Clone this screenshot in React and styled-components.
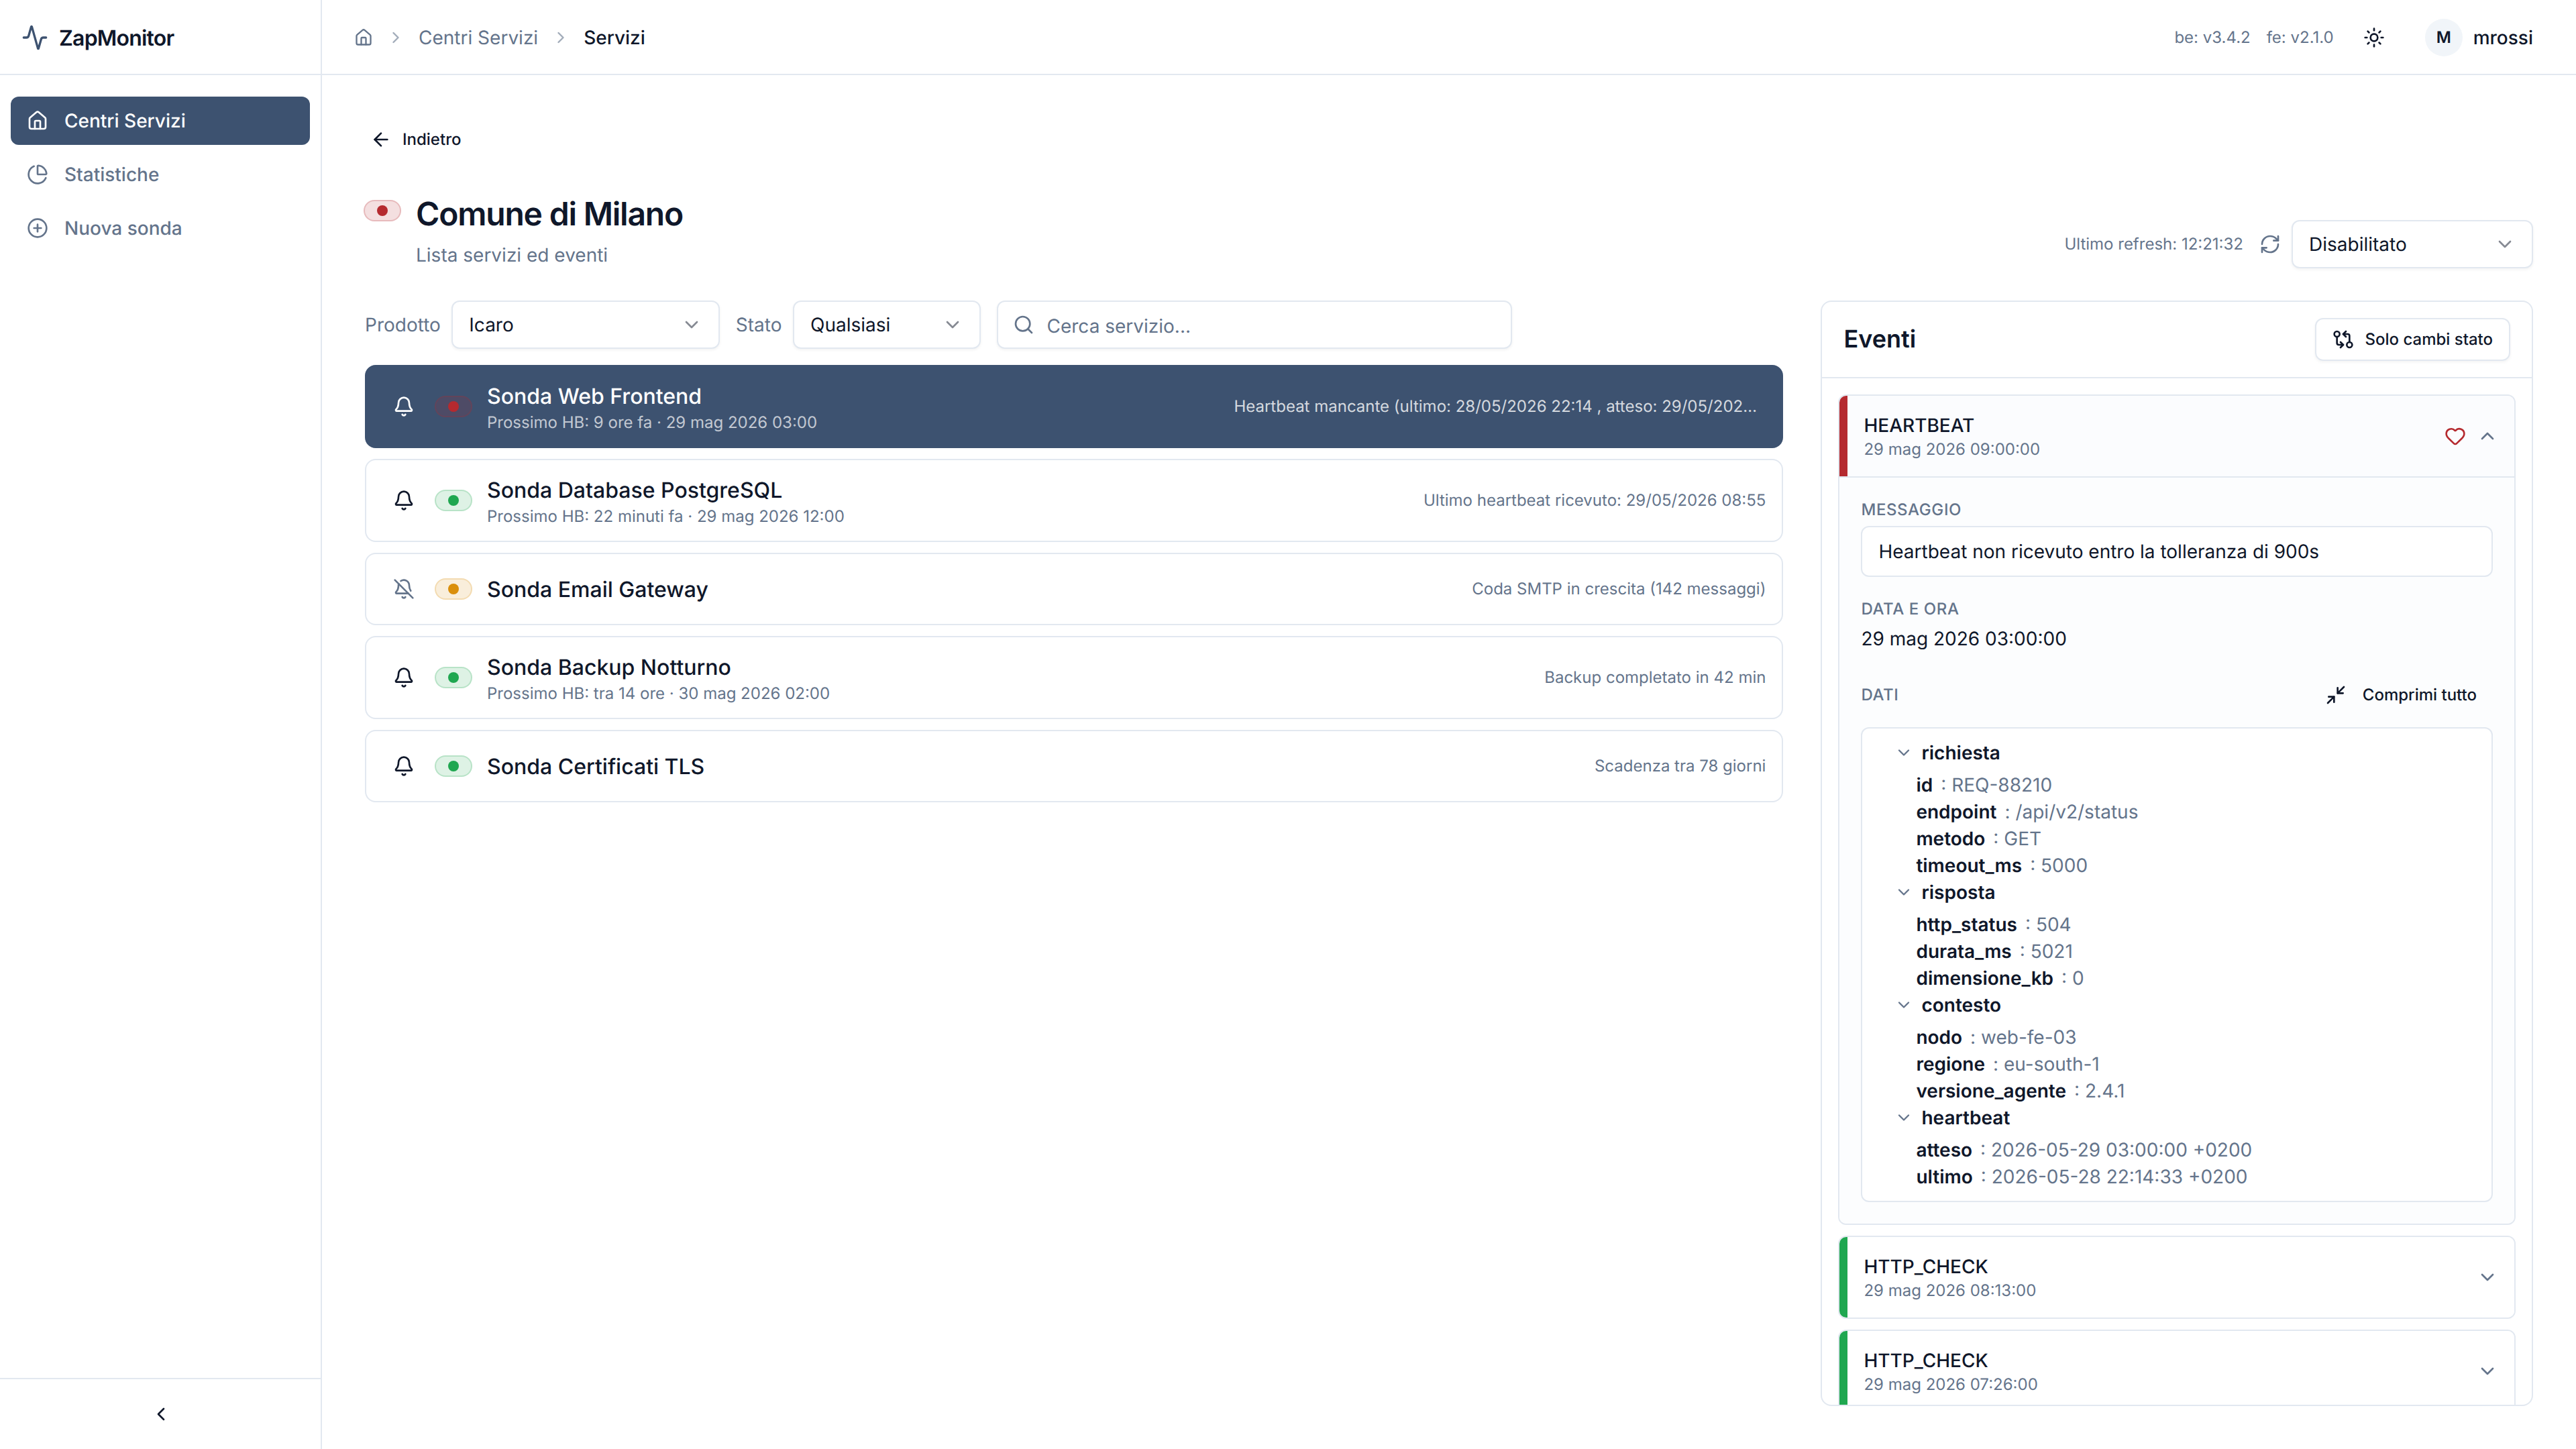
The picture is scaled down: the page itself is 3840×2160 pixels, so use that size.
import React from 'react';

import {
    Activity,
    ArrowLeft,
    Bell,
    BellOff,
    ChartPie,
    ChevronDown,
    ChevronLeft,
    ChevronRight,
    ChevronUp,
    CirclePlus,
    GitCompareArrows,
    Heart,
    House,
    Minimize2,
    RefreshCw,
    Search,
    Sun,
} from 'lucide-react';
import styled, { createGlobalStyle, css } from 'styled-components';

const colors = {
    primary: '#3d5270',
    text: '#0f172a',
    muted: '#64748b',
    border: '#e2e8f0',
    surface: '#f1f5f9',
    error: '#b52a2f',
    ok: '#1fa750',
    warning: '#da8f0b',
};

const tints = {
    error: '181, 42, 47',
    ok: '31, 167, 80',
    warning: '218, 143, 11',
};

const navItems = [
    { label: 'Centri Servizi', icon: House, active: true },
    { label: 'Statistiche', icon: ChartPie },
    { label: 'Nuova sonda', icon: CirclePlus },
];

const services = [
    {
        name: 'Sonda Web Frontend',
        next: 'Prossimo HB: 9 ore fa · 29 mag 2026 03:00',
        note: 'Heartbeat mancante (ultimo: 28/05/2026 22:14 , atteso: 29/05/2026 03:00)',
        status: 'error',
        selected: true,
    },
    {
        name: 'Sonda Database PostgreSQL',
        next: 'Prossimo HB: 22 minuti fa · 29 mag 2026 12:00',
        note: 'Ultimo heartbeat ricevuto: 29/05/2026 08:55',
        status: 'ok',
    },
    {
        name: 'Sonda Email Gateway',
        note: 'Coda SMTP in crescita (142 messaggi)',
        status: 'warning',
        silenced: true,
    },
    {
        name: 'Sonda Backup Notturno',
        next: 'Prossimo HB: tra 14 ore · 30 mag 2026 02:00',
        note: 'Backup completato in 42 min',
        status: 'ok',
    },
    {
        name: 'Sonda Certificati TLS',
        note: 'Scadenza tra 78 giorni',
        status: 'ok',
    },
];

const eventData = {
    richiesta: { id: 'REQ-88210', endpoint: '/api/v2/status', metodo: 'GET', timeout_ms: 5000 },
    risposta: { http_status: 504, durata_ms: 5021, dimensione_kb: 0 },
    contesto: { nodo: 'web-fe-03', regione: 'eu-south-1', versione_agente: '2.4.1' },
    heartbeat: { atteso: '2026-05-29 03:00:00 +0200', ultimo: '2026-05-28 22:14:33 +0200' },
};

const Status = ({ type }) => (
    <StatusBadge $type={type}>
        <StatusDot $type={type} />
    </StatusBadge>
);

const Dropdown = ({ value, width }) => (
    <SelectBox $width={width}>
        {value}
        <ChevronDown size={32} />
    </SelectBox>
);

const Sidebar = () => (
    <Aside>
        <Brand>
            <Activity size={40} color={colors.primary} />
            <BrandName>ZapMonitor</BrandName>
        </Brand>
        <Nav>
            {navItems.map(({ label, icon: Icon, active }) => (
                <NavItem key={label} $active={active}>
                    <Icon size={32} />
                    {label}
                </NavItem>
            ))}
        </Nav>
        <Collapse>
            <ChevronLeft size={32} />
        </Collapse>
    </Aside>
);

const TopBar = () => (
    <Header>
        <Breadcrumb>
            <House size={28} />
            <Separator size={28} />
            <span>Centri Servizi</span>
            <Separator size={28} />
            <Current>Servizi</Current>
        </Breadcrumb>
        <HeaderTools>
            <Version>be: v3.4.2</Version>
            <Version>fe: v2.1.0</Version>
            <IconButton>
                <Sun size={32} />
            </IconButton>
            <User>
                <Avatar>M</Avatar>
                mrossi
            </User>
        </HeaderTools>
    </Header>
);

const ServiceRow = ({ name, next, note, status, selected, silenced }) => (
    <Row $selected={selected}>
        <BellButton $silenced={silenced}>
            {silenced ? <BellOff size={32} /> : <Bell size={32} />}
        </BellButton>
        <Status type={status} />
        <RowText>
            <RowName>{name}</RowName>
            {next && <RowNext $selected={selected}>{next}</RowNext>}
        </RowText>
        <RowNote $selected={selected}>{note}</RowNote>
    </Row>
);

const DataTree = ({ data }) => (
    <Tree>
        {Object.entries(data).map(([group, fields]) => (
            <div key={group}>
                <TreeGroup>
                    <ChevronDown size={28} />
                    {group}
                </TreeGroup>
                <TreeFields>
                    {Object.entries(fields).map(([key, value]) => (
                        <TreeField key={key}>
                            <TreeKey>{key}</TreeKey>
                            <span>: {value}</span>
                        </TreeField>
                    ))}
                </TreeFields>
            </div>
        ))}
    </Tree>
);

const Event = ({ title, date, status, heartbeat, children }) => (
    <EventCard>
        <EventHeader $status={status} $open={!!children}>
            <div>
                <EventTitle>{title}</EventTitle>
                <EventDate>{date}</EventDate>
            </div>
            <EventIcons>
                {heartbeat && <Heart size={32} color={colors.error} />}
                {children ? <ChevronUp size={32} /> : <ChevronDown size={32} />}
            </EventIcons>
        </EventHeader>
        {children && <EventBody>{children}</EventBody>}
    </EventCard>
);

const App = () => (
    <>
        <GlobalStyle />
        <Page>
            <Sidebar />
            <Main>
                <TopBar />
                <Content>
                    <BackButton>
                        <ArrowLeft size={32} />
                        Indietro
                    </BackButton>
                    <TitleBar>
                        <TitleGroup>
                            <Status type="error" />
                            <div>
                                <Title>Comune di Milano</Title>
                                <Subtitle>Lista servizi ed eventi</Subtitle>
                            </div>
                        </TitleGroup>
                        <Refresh>
                            <RefreshLabel>Ultimo refresh: 12:21:32</RefreshLabel>
                            <RefreshCw size={32} />
                            <Dropdown value="Disabilitato" width={360} />
                        </Refresh>
                    </TitleBar>
                    <Columns>
                        <Services>
                            <Filters>
                                <Filter>
                                    Prodotto
                                    <Dropdown value="Icaro" width={400} />
                                </Filter>
                                <Filter>
                                    Stato
                                    <Dropdown value="Qualsiasi" width={280} />
                                </Filter>
                                <SearchBox>
                                    <Search size={32} />
                                    <span>Cerca servizio...</span>
                                </SearchBox>
                            </Filters>
                            {services.map((service) => (
                                <ServiceRow key={service.name} {...service} />
                            ))}
                        </Services>
                        <Panel>
                            <PanelHeader>
                                <PanelTitle>Eventi</PanelTitle>
                                <OutlineButton>
                                    <GitCompareArrows size={32} />
                                    Solo cambi stato
                                </OutlineButton>
                            </PanelHeader>
                            <PanelBody>
                                <Event title="HEARTBEAT" date="29 mag 2026 09:00:00" status="error" heartbeat>
                                    <Section>
                                        <Label>MESSAGGIO</Label>
                                        <Message>Heartbeat non ricevuto entro la tolleranza di 900s</Message>
                                    </Section>
                                    <Section>
                                        <Label>DATA E ORA</Label>
                                        <Value>29 mag 2026 03:00:00</Value>
                                    </Section>
                                    <div>
                                        <DataHeader>
                                            <Label>DATI</Label>
                                            <GhostButton>
                                                <Minimize2 size={32} />
                                                Comprimi tutto
                                            </GhostButton>
                                        </DataHeader>
                                        <DataTree data={eventData} />
                                    </div>
                                </Event>
                                <Event title="HTTP_CHECK" date="29 mag 2026 08:13:00" status="ok" />
                                <Event title="HTTP_CHECK" date="29 mag 2026 07:26:00" status="ok" />
                            </PanelBody>
                        </Panel>
                    </Columns>
                </Content>
            </Main>
        </Page>
    </>
);

export default App;

// STYLED COMPONENTS BELOW:

const GlobalStyle = createGlobalStyle`
    * {
        box-sizing: border-box;
    }

    body {
        margin: 0;
        background: #fff;
        color: ${colors.text};
        font-family: Inter, sans-serif;
        font-size: 28px;
        line-height: 40px;
        text-rendering: geometricPrecision;
        -webkit-font-smoothing: antialiased;
    }

    svg {
        display: block;
        flex-shrink: 0;
    }
`;

const Page = styled.div`
    display: flex;
    height: 100vh;
    overflow: hidden;
`;

const Aside = styled.aside`
    display: flex;
    flex-direction: column;
    width: 480px;
    flex-shrink: 0;
    border-right: 2px solid ${colors.border};
`;

const Brand = styled.div`
    display: flex;
    align-items: center;
    gap: 16px;
    height: 112px;
    padding: 0 32px;
    box-shadow: inset 0 -2px 0 ${colors.border};
`;

const BrandName = styled.span`
    font-size: 32px;
    font-weight: 600;
    line-height: 41px;
    letter-spacing: -0.025em;
`;

const Nav = styled.nav`
    display: flex;
    flex-direction: column;
    flex: 1;
    gap: 8px;
    padding: 32px 16px;
`;

const NavItem = styled.a`
    display: flex;
    align-items: center;
    gap: 24px;
    height: 72px;
    padding: 0 24px;
    border-radius: 12px;
    font-weight: 500;
    color: ${({ $active }) => ($active ? '#fff' : colors.muted)};
    background: ${({ $active }) => ($active ? colors.primary : 'transparent')};
`;

const Collapse = styled.div`
    display: flex;
    align-items: center;
    justify-content: center;
    height: 106px;
    padding-left: 2px;
    border-top: 2px solid ${colors.border};
`;

const Main = styled.main`
    display: flex;
    flex-direction: column;
    flex: 1;
    min-width: 0;
`;

const Header = styled.header`
    display: flex;
    align-items: center;
    justify-content: space-between;
    height: 112px;
    flex-shrink: 0;
    padding: 0 48px;
    box-shadow: inset 0 -2px 0 ${colors.border};
`;

const Breadcrumb = styled.nav`
    display: flex;
    align-items: center;
    gap: 20px;
    color: ${colors.muted};
`;

const Separator = styled(ChevronRight)`
    opacity: 0.6;
`;

const Current = styled.span`
    font-weight: 500;
    color: ${colors.text};
`;

const HeaderTools = styled.div`
    display: flex;
    align-items: center;
    gap: 24px;
`;

const Version = styled.span`
    font-size: 24px;
    color: ${colors.muted};
`;

const IconButton = styled.div`
    display: flex;
    align-items: center;
    justify-content: center;
    width: 72px;
    height: 72px;
`;

const User = styled.div`
    display: flex;
    align-items: center;
    gap: 16px;
    padding: 0 16px;
    font-weight: 500;
`;

const Avatar = styled.div`
    display: flex;
    align-items: center;
    justify-content: center;
    width: 56px;
    height: 56px;
    border-radius: 50%;
    background: ${colors.surface};
    font-size: 24px;
    font-weight: 600;
`;

const Content = styled.div`
    display: flex;
    flex-direction: column;
    flex: 1;
    min-height: 0;
    gap: 48px;
    padding: 64px;
`;

const smallButton = css`
    display: flex;
    align-items: center;
    height: 64px;
    font-size: 24px;
    font-weight: 500;
`;

const BackButton = styled.div`
    ${smallButton}
    align-self: flex-start;
    gap: 16px;
    padding-left: 8px;
`;

const TitleBar = styled.div`
    display: flex;
    align-items: flex-end;
    justify-content: space-between;
    height: 112px;
`;

const StatusBadge = styled.span`
    display: flex;
    align-items: center;
    justify-content: center;
    flex-shrink: 0;
    width: 56px;
    height: 32px;
    margin: 0 -2px;
    border: 2px solid rgba(${({ $type }) => tints[$type]}, 0.2);
    border-radius: 16px;
    background: rgba(${({ $type }) => tints[$type]}, 0.15);
`;

const StatusDot = styled.span`
    width: 16px;
    height: 16px;
    border-radius: 50%;
    background: ${({ $type }) => colors[$type]};
`;

const TitleGroup = styled.div`
    display: flex;
    gap: 24px;

    ${StatusBadge} {
        margin-top: 10px;
    }
`;

const Title = styled.h1`
    margin: 0 0 10px;
    font-size: 48px;
    font-weight: 600;
    line-height: 62px;
    letter-spacing: -0.025em;
`;

const Subtitle = styled.p`
    margin: 0;
    color: ${colors.muted};
`;

const Refresh = styled.div`
    display: flex;
    align-items: center;
    gap: 16px;
    color: ${colors.muted};
`;

const RefreshLabel = styled.span`
    margin-right: 8px;
    font-size: 24px;
`;

const field = css`
    display: flex;
    align-items: center;
    height: 72px;
    border: 2px solid ${colors.border};
    border-radius: 12px;
    background: #fff;
    box-shadow: 0 2px 4px rgba(0, 0, 0, 0.05);
`;

const SelectBox = styled.div`
    ${field}
    justify-content: space-between;
    width: ${({ $width }) => $width}px;
    padding: 0 24px;
    color: ${colors.text};

    svg {
        opacity: 0.5;
    }
`;

const Columns = styled.div`
    display: flex;
    flex: 1;
    min-height: 0;
    gap: 56px;
`;

const Services = styled.section`
    display: flex;
    flex-direction: column;
    flex: 1;
    min-width: 0;
    gap: 16px;
`;

const Filters = styled.div`
    display: flex;
    gap: 23.5px;
    margin-bottom: 8px;
`;

const Filter = styled.div`
    display: flex;
    align-items: center;
    gap: 16.5px;
    color: ${colors.muted};
`;

const SearchBox = styled.div`
    ${field}
    width: 768px;
    gap: 19px;
    padding: 0 22px;
    color: ${colors.muted};

    span {
        padding-top: 3px;
    }
`;

const Row = styled.article`
    display: flex;
    align-items: center;
    gap: 16px;
    padding: 20px 24px;
    border: 2px solid ${({ $selected }) => ($selected ? colors.primary : colors.border)};
    border-radius: 16px;
    color: ${({ $selected }) => ($selected ? '#fff' : colors.text)};
    background: ${({ $selected }) => ($selected ? colors.primary : '#fff')};
`;

const BellButton = styled.div`
    display: flex;
    align-items: center;
    justify-content: center;
    width: 64px;
    height: 64px;
    color: ${({ $silenced }) => ($silenced ? colors.muted : 'inherit')};
`;

const RowText = styled.div`
    flex: 1;
    margin-left: 8px;
`;

const RowName = styled.div`
    margin-bottom: -2px;
    font-size: 32px;
    font-weight: 500;
    line-height: 50px;
`;

const RowNext = styled.div`
    font-size: 24px;
    line-height: 32px;
    color: ${({ $selected }) => ($selected ? 'rgba(255, 255, 255, 0.7)' : colors.muted)};
`;

const RowNote = styled.div`
    max-width: 793px;
    overflow: hidden;
    text-overflow: ellipsis;
    white-space: nowrap;
    font-size: 24px;
    line-height: 32px;
    color: ${({ $selected }) => ($selected ? 'rgba(255, 255, 255, 0.8)' : colors.muted)};
`;

const Panel = styled.section`
    display: flex;
    flex-direction: column;
    width: 1061.6px;
    flex-shrink: 0;
    border: 2px solid ${colors.border};
    border-radius: 16px;
    overflow: hidden;
`;

const PanelHeader = styled.div`
    display: flex;
    align-items: center;
    justify-content: space-between;
    padding: 24px 32px;
    border-bottom: 2px solid ${colors.border};
`;

const PanelTitle = styled.h2`
    margin: 0;
    padding-bottom: 2px;
    font-size: 36px;
    font-weight: 600;
`;

const OutlineButton = styled.div`
    ${smallButton}
    gap: 16px;
    padding: 0 24px;
    border: 2px solid ${colors.border};
    border-radius: 12px;
    box-shadow: 0 2px 4px rgba(0, 0, 0, 0.05);
`;

const PanelBody = styled.div`
    display: flex;
    flex-direction: column;
    flex: 1;
    min-height: 0;
    gap: 16px;
    padding: 24px;
    overflow: hidden;
`;

const EventCard = styled.article`
    flex-shrink: 0;
    border: 2px solid ${colors.border};
    border-radius: 12px;
    overflow: hidden;
    background: #fff;
`;

const EventHeader = styled.div`
    display: flex;
    align-items: center;
    justify-content: space-between;
    height: 120px;
    padding: 0 24px 0 36px;
    background: ${({ $open }) => ($open ? '#fbfcfe' : '#fff')};
    box-shadow: inset 12px 0 0 ${({ $status }) => colors[$status]};
`;

const EventTitle = styled.div`
    font-weight: 500;
`;

const EventDate = styled.div`
    font-size: 24px;
    line-height: 32px;
    color: ${colors.muted};
`;

const EventIcons = styled.div`
    display: flex;
    gap: 16px;
    color: ${colors.muted};
`;

const EventBody = styled.div`
    padding: 32px;
    border-top: 2px solid ${colors.border};
    background: #fcfdfe;
`;

const Section = styled.div`
    margin-bottom: 32px;
`;

const Label = styled.div`
    font-size: 24px;
    font-weight: 500;
    line-height: 32px;
    letter-spacing: 0.025em;
    color: ${colors.muted};
`;

const Message = styled.div`
    margin-top: 8px;
    padding: 16px 24px;
    border: 2px solid ${colors.border};
    border-radius: 12px;
    background: #fff;
`;

const Value = styled.div`
    margin-top: 8px;
`;

const DataHeader = styled.div`
    display: flex;
    align-items: center;
    justify-content: space-between;
    margin-bottom: 16px;
`;

const GhostButton = styled.div`
    ${smallButton}
    gap: 24px;
    padding: 0 24px;
`;

const Tree = styled.div`
    padding: 16px 48px;
    border: 2px solid ${colors.border};
    border-radius: 12px;
    background: #fff;
`;

const TreeGroup = styled.div`
    display: flex;
    align-items: center;
    gap: 12px;
    font-weight: 600;

    svg {
        color: ${colors.muted};
    }
`;

const TreeFields = styled.div`
    padding: 8px 0 0 32px;
`;

const TreeField = styled.div`
    display: flex;
    gap: 12px;
    color: ${colors.muted};
`;

const TreeKey = styled.span`
    font-weight: 600;
    color: ${colors.text};
`;
